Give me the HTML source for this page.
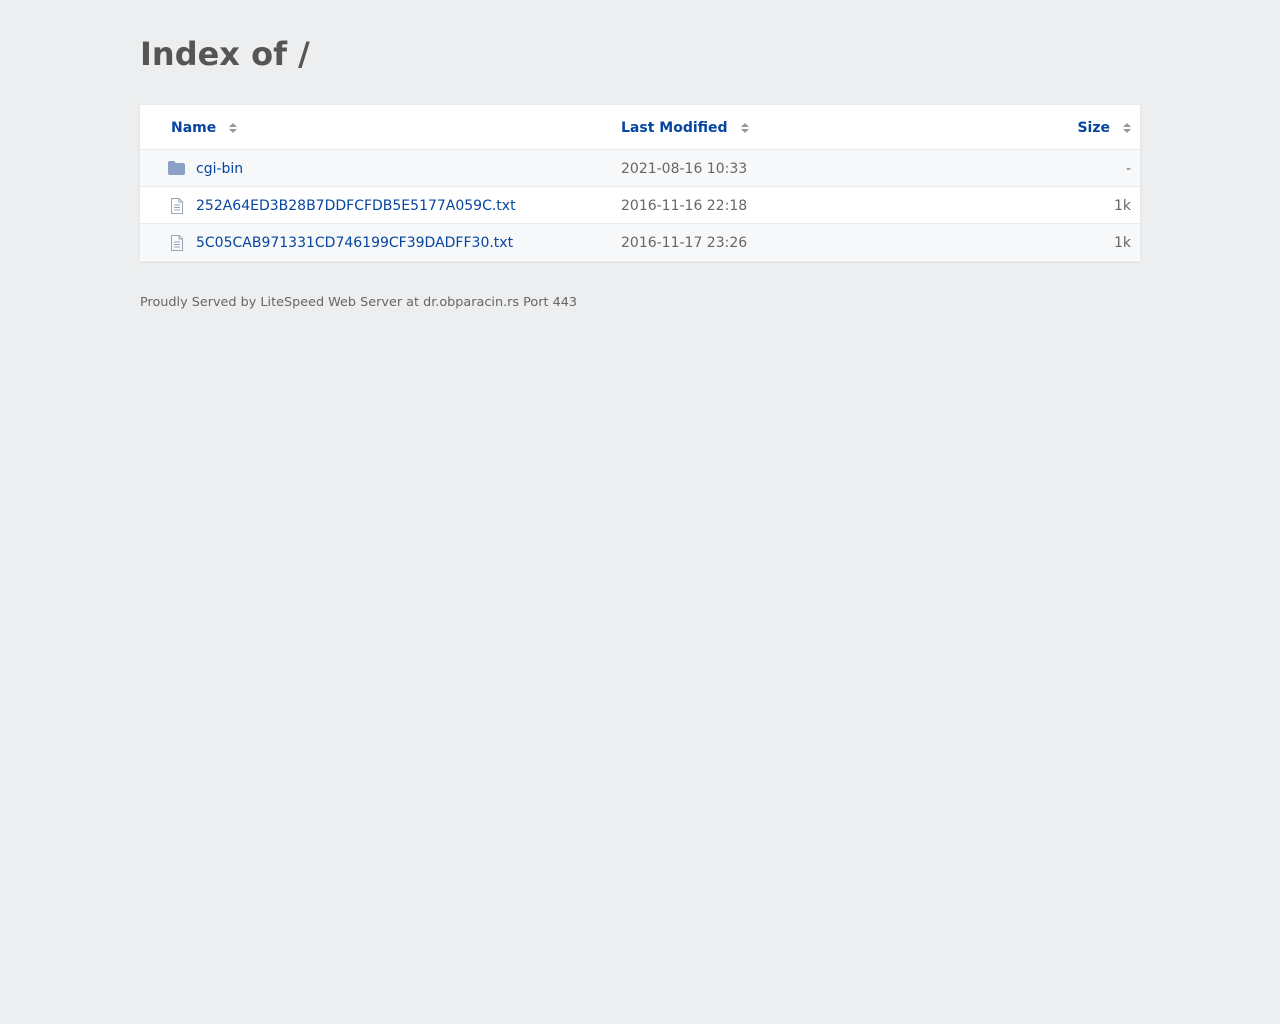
<!DOCTYPE html>
<html><head><style>
body{margin:0;background:#eceeef;font-family:"DejaVu Sans",sans-serif;color:#555;}
h1{position:absolute;left:140px;top:34px;margin:0;font-size:32px;font-weight:bold;color:#555;line-height:40px;}
.tbl{position:absolute;left:140px;top:105px;width:1000px;background:#fff;box-shadow:0 1px 4px rgba(0,0,0,.06);padding-bottom:1px;}
.row{position:relative;height:36px;border-top:1px solid #e8eaec;font-size:14px;line-height:38px;}
.row.alt{background:#f7f8f9;}
.hd{height:44px;line-height:47px;font-weight:bold;color:#0645a0;font-size:14px;position:relative;}
a{color:#0645a0;text-decoration:none;}
.c1{position:absolute;left:56px;}
.c2{position:absolute;left:481px;color:#666;}
.c3{position:absolute;right:9px;color:#666;}
.ic{position:absolute;left:28px;top:11px;}
.ar{display:inline-block;vertical-align:middle;margin-left:13px;}
</style></head><body>
<h1>Index of /</h1>
<div class="tbl">
<div class="hd"><span style="position:absolute;left:31px">Name<svg class="ar" width="8" height="10"><path d="M4 0L8 4H0Z M4 10L0 6H8Z" fill="#999"/></svg></span>
<span style="position:absolute;left:481px">Last Modified<svg class="ar" width="8" height="10"><path d="M4 0L8 4H0Z M4 10L0 6H8Z" fill="#999"/></svg></span>
<span style="position:absolute;right:9px">Size<svg class="ar" width="8" height="10"><path d="M4 0L8 4H0Z M4 10L0 6H8Z" fill="#999"/></svg></span></div>
<div class="row alt"><svg class="ic" width="17" height="14"><path d="M0 2Q0 0 2 0H6L8 2H15Q17 2 17 4V12Q17 14 15 14H2Q0 14 0 12Z" fill="#8aa0c4"/></svg><span class="c1"><a>cgi-bin</a></span><span class="c2">2021-08-16 10:33</span><span class="c3">-</span></div>
<div class="row"><svg class="ic" width="14" height="16" style="left:30px"><path d="M1.5 .5H9L12.5 4V15.5H1.5Z M9 .5V4H12.5 M4 7H10 M4 9.5H10 M4 12H10" fill="none" stroke="#9aa6b6"/></svg><span class="c1"><a>252A64ED3B28B7DDFCFDB5E5177A059C.txt</a></span><span class="c2">2016-11-16 22:18</span><span class="c3">1k</span></div>
<div class="row alt"><svg class="ic" width="14" height="16" style="left:30px"><path d="M1.5 .5H9L12.5 4V15.5H1.5Z M9 .5V4H12.5 M4 7H10 M4 9.5H10 M4 12H10" fill="none" stroke="#9aa6b6"/></svg><span class="c1"><a>5C05CAB971331CD746199CF39DADFF30.txt</a></span><span class="c2">2016-11-17 23:26</span><span class="c3">1k</span></div>
</div>
<div style="position:absolute;left:140px;top:295px;font-size:12.8px;color:#666">Proudly Served by LiteSpeed Web Server at dr.obparacin.rs Port 443</div>
</body></html>
